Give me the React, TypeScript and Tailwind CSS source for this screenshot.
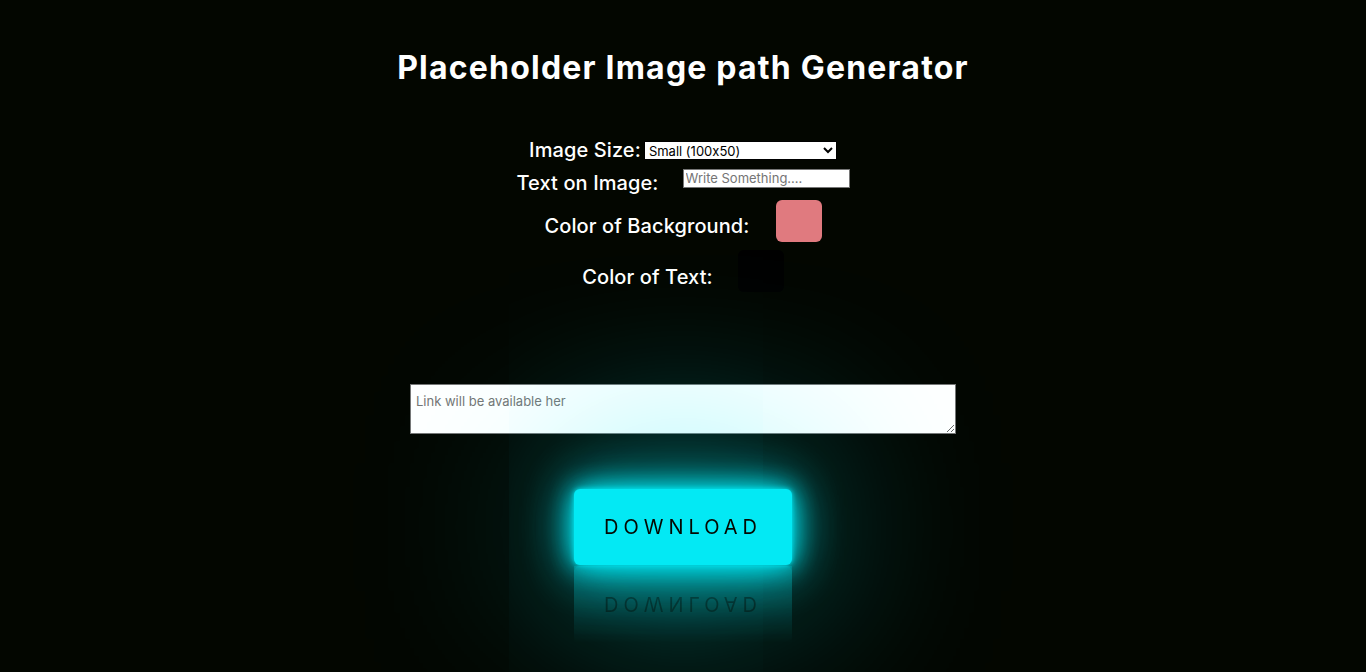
import React from "react";

const font = "font-['Inter','Noto_Sans',sans-serif] [font-feature-settings:'calt'_0]";

const Swatch = ({ color }: { color: string }) => (
  <div className="h-[42px] w-[46px] rounded-[6px]" style={{ backgroundColor: color }} />
);

const App = () => {
  return (
    <div className={`min-h-screen bg-[#030600] flex flex-col items-center text-white ${font}`}>
      <h1 className="mt-[48px] text-[32px] leading-[40px] font-bold tracking-[1.2px]">
        Placeholder Image path Generator
      </h1>

      <div className="mt-[52px] flex items-center">
        <label className="text-[20px] leading-[20px] font-medium tracking-[0.1px]">Image Size:</label>
        <select
          defaultValue="small"
          className={`ml-[3px] h-[19px] w-[193px] border border-black bg-white text-[13px] text-black ${font}`}
        >
          <option value="small">Small (100x50)</option>
          <option value="medium">Medium (200x100)</option>
          <option value="large">Large (400x200)</option>
        </select>
      </div>

      <div className="mt-[9px] flex h-[27px] items-start">
        <label className="text-[20px] leading-[28px] font-medium tracking-[0.1px]">Text on Image:</label>
        <input
          placeholder="Write Something...."
          className={`ml-[24px] h-[19px] w-[167px] border border-[#767676] bg-white px-[2px] text-[13px] text-black placeholder:text-[#757575] ${font}`}
        />
      </div>

      <div className="mt-[4px] flex items-start">
        <label className="mt-[12px] text-[20px] leading-[28px] font-medium tracking-[0.1px]">Color of Background:</label>
        <div className="ml-[26px]">
          <Swatch color="#e07a7f" />
        </div>
      </div>

      <div className="mt-[8px] flex items-start">
        <label className="mt-[13px] text-[20px] leading-[28px] font-medium tracking-[0.1px]">Color of Text:</label>
        <div className="ml-[25px]">
          <Swatch color="#000000" />
        </div>
      </div>

      <textarea
        placeholder="Link will be available her"
        className={`mt-[92px] h-[50px] w-[546px] border border-[#767676] bg-white px-[5px] py-[8px] text-[13px] leading-[16px] text-black placeholder:text-[#757575] ${font}`}
      />

      <button
        className="mt-[55px] h-[76px] w-[218px] rounded-[6px] bg-[#03e9f4] text-[20px] tracking-[5px] text-[#050801] shadow-[0_0_5px_#03e9f4,0_0_25px_#03e9f4,0_0_50px_#03e9f4,0_0_200px_#03e9f4] [-webkit-box-reflect:below_1px_linear-gradient(transparent,#0005)]"
      >
        DOWNLOAD
      </button>
    </div>
  );
};

export default App;
